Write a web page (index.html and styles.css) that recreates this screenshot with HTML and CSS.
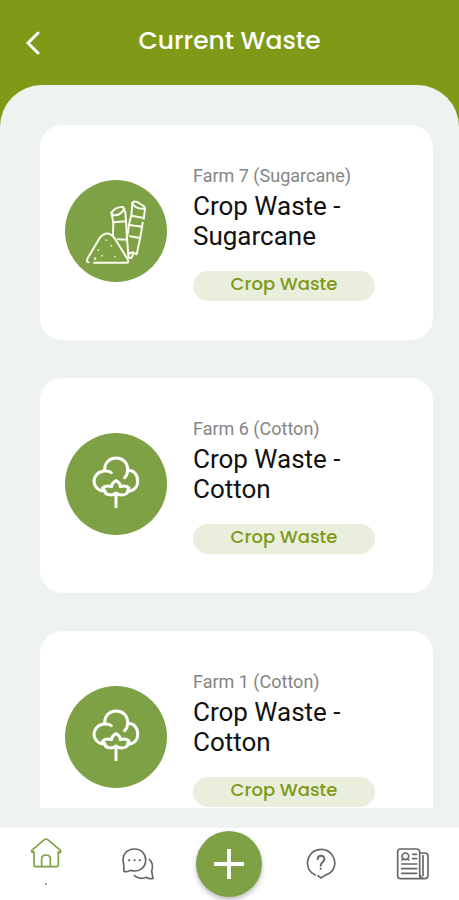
FILE: index.html
```html
<!DOCTYPE html>
<html lang="en">
<head>
  <meta charset="UTF-8" />
  <meta name="viewport" content="width=device-width, initial-scale=1.0"/>
  <title>Current Waste</title>
  <link rel="stylesheet" href="styles.css">
</head>
<body>
  <svg class="sprite" aria-hidden="true">
    <symbol id="sugarcane" viewBox="31 30 306 306">
      <g fill="none" stroke="#fbfdf0" stroke-width="6" stroke-linecap="round" stroke-linejoin="round">
        <path d="M118 278H218Q223 277 219 268L180 205Q158 176 135 204L99 265Q93 277 102 277"/>
        <path d="M170 128L176 157L175 196M170 128Q184 109 205 111L212 126L214 153L217 207L222 263L230 264L237 249"/>
        <path d="M170 128L176 136Q198 137 209 116M176 157L214 154M189 208L218 209"/>
        <path d="M233 99Q236 92 248 96L267 108Q272 112 271 119L267 146M233 99L230 136L223 163L219 193"/>
        <path d="M233 99Q240 118 270 116M230 137L268 144M223 165L262 170M264 158L262 172L257 201L246 253L235 247L221 251M226 199L256 204"/>
      </g>
      <g fill="#dce9bd">
        <circle cx="155" cy="211" r="3"/><circle cx="170" cy="227" r="3"/><circle cx="131" cy="241" r="3"/>
        <circle cx="142" cy="257" r="3"/><circle cx="181" cy="260" r="3"/><circle cx="121" cy="266" r="4"/>
      </g>
    </symbol>
    <symbol id="cotton" viewBox="31 27 306 306">
      <g fill="none" stroke="#fff" stroke-width="9" stroke-linecap="round" stroke-linejoin="round">
        <path d="M170 146C160 138 136 138 124 154C111 173 121 197 146 201"/>
        <path d="M150 137C150 90 219 90 219 137C219 147 216 155 210 161"/>
        <path d="M219 140C237 137 250 153 249 172C249 189 238 201 220 202"/>
        <path d="M144 192C151 186 161 185 171 188C171 179 177 174 184 170C192 174 197 180 197 188C207 185 216 186 223 192C219 198 216 201 218 207C209 215 194 215 184 207C174 215 160 214 152 207C153 201 149 197 144 192"/>
        <path d="M184 209V252" stroke-linecap="butt"/>
      </g>
    </symbol>
  </svg>

  <div class="app">
    <header class="header">
      <button class="back" aria-label="Back">
        <svg width="16" height="24" viewBox="0 0 16 24"><path d="M14 2L4 12L14 22" fill="none" stroke="#fff" stroke-width="3" stroke-linecap="round"/></svg>
      </button>
      <h1>Current Waste</h1>
    </header>

    <main class="panel">
      <div class="list">
        <article class="card">
          <svg class="crop"><use href="#sugarcane"/></svg>
          <div class="info">
            <p class="farm">Farm 7 (Sugarcane)</p>
            <h2>Crop Waste - Sugarcane</h2>
            <span class="tag">Crop Waste</span>
          </div>
        </article>
        <article class="card">
          <svg class="crop"><use href="#cotton"/></svg>
          <div class="info">
            <p class="farm">Farm 6 (Cotton)</p>
            <h2>Crop Waste - Cotton</h2>
            <span class="tag">Crop Waste</span>
          </div>
        </article>
        <article class="card">
          <svg class="crop"><use href="#cotton"/></svg>
          <div class="info">
            <p class="farm">Farm 1 (Cotton)</p>
            <h2>Crop Waste - Cotton</h2>
            <span class="tag">Crop Waste</span>
          </div>
        </article>
      </div>
    </main>

    <nav class="nav">
      <a href="#home" class="active" aria-label="Home">
        <svg width="32" height="32" viewBox="91 202 96 96">
          <path d="M98 248Q93 244 99 240L134 210Q139 206 144 210L180 240Q186 245 181 249L176 246V287Q176 291 171 291H108Q103 291 103 286V246ZM126 290V267Q127 256 139 256Q151 256 152 267V290"/>
        </svg>
        <span class="dot"></span>
      </a>
      <a href="#chat" aria-label="Chat">
        <svg width="34" height="34" viewBox="364 230 102 102">
          <path d="M373 303L372 280C364 255 381 236 404 236C426 236 439 252 438 271C437 293 417 307 394 300Q383 306 373 303Z"/>
          <path d="M449 267Q463 279 456 303L460 324Q448 327 440 321Q418 329 404 316"/>
          <path d="M388 270h1M404 270h1M420 270h1" stroke-width="6"/>
        </svg>
      </a>
      <button class="add" aria-label="Add">
        <svg width="32" height="32" viewBox="0 0 32 32"><path d="M16 1V31M1 16H31"/></svg>
      </button>
      <a href="#help" aria-label="Help">
        <svg width="32" height="34" viewBox="230 230 96 102">
          <path d="M261 314Q248 309 242 298C229 270 246 237 279 237C308 237 326 267 317 292Q310 309 290 315L278 323L269 316"/>
          <path d="M268 266C269 252 289 253 288 267C287 276 278 275 277 286M277 295v1" stroke-width="6"/>
        </svg>
      </a>
      <a href="#news" aria-label="News">
        <svg width="34" height="34" viewBox="502 230 102 102">
          <path d="M515 236H564Q573 236 573 245V315Q573 325 583 325H516Q507 325 507 316V245Q507 236 515 236ZM574 248H589Q598 248 598 257V315Q598 325 587 325Q575 325 575 315"/>
          <path d="M519 281H564M519 295H564M519 309H564M583 256V316"/>
          <path d="M552 252H564M552 265H564"/>
          <circle cx="530" cy="258" r="10"/>
          <path d="M520 269L524 265M540 269L536 265"/>
        </svg>
      </a>
    </nav>
  </div>
</body>
</html>
```

FILE: styles.css
```css
* {
  box-sizing: border-box;
}

body {
  margin: 0;
  font-family: Roboto, Arial, sans-serif;
  background-color: #7e9a16;
}

h1,
h2,
p {
  margin: 0;
}

button {
  border: none;
  padding: 0;
  cursor: pointer;
}

.sprite {
  display: none;
}

.app {
  display: flex;
  flex-direction: column;
  height: 100vh;
}

.header {
  display: grid;
  grid-template-columns: 32px 1fr 32px;
  align-items: center;
  padding: 25px 16px 28px;
  color: #fff;
}

.header h1 {
  font-family: Poppins, Inter, sans-serif;
  font-size: 25px;
  font-weight: 500;
  line-height: 32px;
  text-align: center;
}

.back {
  display: flex;
  justify-content: center;
  padding-top: 4px;
  background: none;
}

.panel {
  flex: 1;
  min-height: 0;
  display: flex;
  padding: 40px 26px 20px 40px;
  background-color: #eef3f0;
  border-radius: 42px 42px 0 0;
}

.list {
  flex: 1;
  display: flex;
  flex-direction: column;
  gap: 38px;
  overflow-y: auto;
  scrollbar-width: none;
}

.card {
  flex-shrink: 0;
  display: flex;
  align-items: center;
  gap: 26px;
  padding: 36px 58px 39px 25px;
  background-color: #fff;
  border-radius: 22px;
}

.crop {
  flex-shrink: 0;
  width: 102px;
  height: 102px;
  border-radius: 50%;
  background-color: #7ea145;
}

.info {
  flex: 1;
}

.farm {
  font-size: 18px;
  line-height: 30px;
  color: #858585;
}

.info h2 {
  margin-bottom: 20px;
  font-size: 26px;
  font-weight: 400;
  line-height: 30px;
  color: #111;
}

.tag {
  display: block;
  padding-bottom: 4px;
  border-radius: 15px;
  background-color: #e9eedd;
  color: #7e9a16;
  font-family: Poppins, Inter, sans-serif;
  font-size: 18px;
  font-weight: 500;
  line-height: 26px;
  text-align: center;
}

.nav {
  display: grid;
  grid-template-columns: repeat(5, 1fr);
  place-items: center;
  height: 72px;
  background-color: #fff;
}

.nav a {
  display: flex;
  flex-direction: column;
  align-items: center;
  color: #666;
}

.nav svg {
  fill: none;
  stroke: currentColor;
  stroke-width: 5px;
  stroke-linecap: round;
  stroke-linejoin: round;
}

.nav .active {
  gap: 14px;
  padding-bottom: 6px;
  color: #7ea145;
}

.dot {
  width: 2px;
  height: 2px;
  border-radius: 50%;
  background-color: #7ea145;
}

.add {
  display: flex;
  align-items: center;
  justify-content: center;
  width: 66px;
  height: 66px;
  border-radius: 50%;
  background-color: #7ea145;
  color: #fff;
  box-shadow: 0 3px 5px rgba(0, 0, 0, 0.25);
}

.nav .add svg {
  stroke-width: 4px;
  stroke-linecap: butt;
}
```
